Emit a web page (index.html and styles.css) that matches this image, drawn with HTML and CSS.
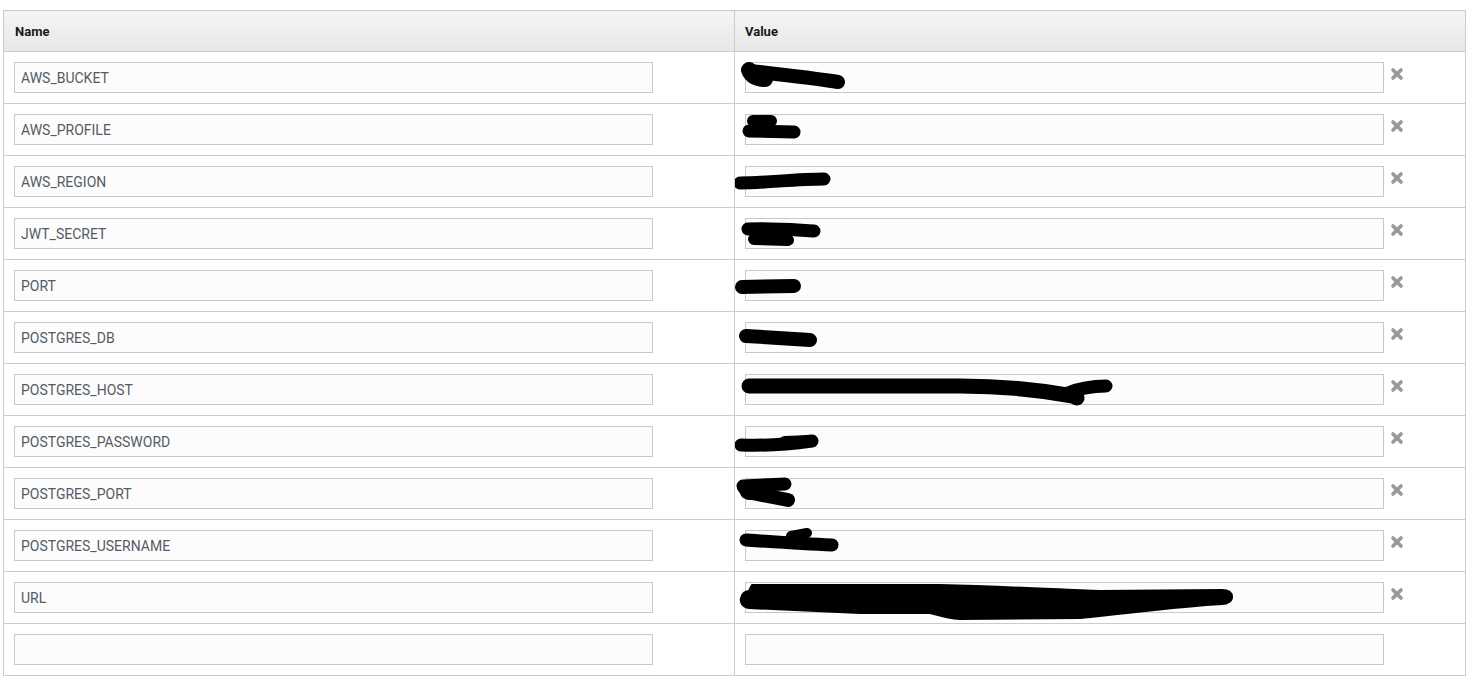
FILE: index.html
```html
<!DOCTYPE html>
<html lang="en">
<head>
<meta charset="utf-8">
<title>Environment properties</title>
<link rel="stylesheet" href="styles.css">
</head>
<body>
<div class="wrap">
<table class="env">
  <colgroup><col class="c-name"><col class="c-value"></colgroup>
  <thead>
    <tr><th>Name</th><th>Value</th></tr>
  </thead>
  <tbody>
    <tr><td><input class="field" value="AWS_BUCKET"></td><td class="vcell"><div class="vrow"><input class="field"><span class="del"><svg viewBox="0 0 14 14" width="14" height="14"><path d="M3 3L11 11M11 3L3 11" stroke="#999999" stroke-width="3.6" stroke-linecap="round"/></svg></span></div>
      <svg class="ink" viewBox="0 0 730 51"><path d="M16 19 C40 22 80 26 103 30" style="stroke-width:14"/><path d="M14 18 C16 24 22 27 30 27" style="stroke-width:16"/></svg></td></tr>
    <tr><td><input class="field" value="AWS_PROFILE"></td><td class="vcell"><div class="vrow"><input class="field"><span class="del"><svg viewBox="0 0 14 14" width="14" height="14"><path d="M3 3L11 11M11 3L3 11" stroke="#999999" stroke-width="3.6" stroke-linecap="round"/></svg></span></div>
      <svg class="ink" viewBox="0 0 730 51"><path d="M18 17 L36 17" style="stroke-width:12"/><path d="M14 27 L59 28" style="stroke-width:13"/></svg></td></tr>
    <tr><td><input class="field" value="AWS_REGION"></td><td class="vcell"><div class="vrow"><input class="field"><span class="del"><svg viewBox="0 0 14 14" width="14" height="14"><path d="M3 3L11 11M11 3L3 11" stroke="#999999" stroke-width="3.6" stroke-linecap="round"/></svg></span></div>
      <svg class="ink" viewBox="0 0 730 51"><path d="M5 27 C30 27 60 23 89 23" style="stroke-width:13"/></svg></td></tr>
    <tr><td><input class="field" value="JWT_SECRET"></td><td class="vcell"><div class="vrow"><input class="field"><span class="del"><svg viewBox="0 0 14 14" width="14" height="14"><path d="M3 3L11 11M11 3L3 11" stroke="#999999" stroke-width="3.6" stroke-linecap="round"/></svg></span></div>
      <svg class="ink" viewBox="0 0 730 51"><path d="M13 21 C40 20 60 22 79 23" style="stroke-width:13"/><path d="M19 31 L53 32" style="stroke-width:12"/></svg></td></tr>
    <tr><td><input class="field" value="PORT"></td><td class="vcell"><div class="vrow"><input class="field"><span class="del"><svg viewBox="0 0 14 14" width="14" height="14"><path d="M3 3L11 11M11 3L3 11" stroke="#999999" stroke-width="3.6" stroke-linecap="round"/></svg></span></div>
      <svg class="ink" viewBox="0 0 730 51"><path d="M7 27 L59 26" style="stroke-width:14"/></svg></td></tr>
    <tr><td><input class="field" value="POSTGRES_DB"></td><td class="vcell"><div class="vrow"><input class="field"><span class="del"><svg viewBox="0 0 14 14" width="14" height="14"><path d="M3 3L11 11M11 3L3 11" stroke="#999999" stroke-width="3.6" stroke-linecap="round"/></svg></span></div>
      <svg class="ink" viewBox="0 0 730 51"><path d="M11 24 C30 25 60 27 75 28" style="stroke-width:14"/></svg></td></tr>
    <tr><td><input class="field" value="POSTGRES_HOST"></td><td class="vcell"><div class="vrow"><input class="field"><span class="del"><svg viewBox="0 0 14 14" width="14" height="14"><path d="M3 3L11 11M11 3L3 11" stroke="#999999" stroke-width="3.6" stroke-linecap="round"/></svg></span></div>
      <svg class="ink" viewBox="0 0 730 51"><path d="M14 22 L225 22 C270 22 305 26 338 32 L342 34" style="stroke-width:15"/><path d="M333 29 C345 24 360 22 371 22" style="stroke-width:13"/></svg></td></tr>
    <tr><td><input class="field" value="POSTGRES_PASSWORD"></td><td class="vcell"><div class="vrow"><input class="field"><span class="del"><svg viewBox="0 0 14 14" width="14" height="14"><path d="M3 3L11 11M11 3L3 11" stroke="#999999" stroke-width="3.6" stroke-linecap="round"/></svg></span></div>
      <svg class="ink" viewBox="0 0 730 51"><path d="M6 29 C30 30 55 28 77 25" style="stroke-width:13"/><path d="M50 26 L76 25" style="stroke-width:12"/></svg></td></tr>
    <tr><td><input class="field" value="POSTGRES_PORT"></td><td class="vcell"><div class="vrow"><input class="field"><span class="del"><svg viewBox="0 0 14 14" width="14" height="14"><path d="M3 3L11 11M11 3L3 11" stroke="#999999" stroke-width="3.6" stroke-linecap="round"/></svg></span></div>
      <svg class="ink" viewBox="0 0 730 51"><path d="M8 18 L50 16" style="stroke-width:13"/><path d="M12 24 L53 32" style="stroke-width:14"/><path d="M9 19 L14 25" style="stroke-width:14"/></svg></td></tr>
    <tr><td><input class="field" value="POSTGRES_USERNAME"></td><td class="vcell"><div class="vrow"><input class="field"><span class="del"><svg viewBox="0 0 14 14" width="14" height="14"><path d="M3 3L11 11M11 3L3 11" stroke="#999999" stroke-width="3.6" stroke-linecap="round"/></svg></span></div>
      <svg class="ink" viewBox="0 0 730 51"><path d="M11 20 C40 22 70 24 97 25" style="stroke-width:13"/><path d="M56 16 L72 13" style="stroke-width:10"/></svg></td></tr>
    <tr><td><input class="field" value="URL"></td><td class="vcell"><div class="vrow"><input class="field"><span class="del"><svg viewBox="0 0 14 14" width="14" height="14"><path d="M3 3L11 11M11 3L3 11" stroke="#999999" stroke-width="3.6" stroke-linecap="round"/></svg></span></div>
      <svg class="ink" viewBox="0 0 730 51"><path class="fill" d="M17 13 L205 13 C280 15 330 18 365 19 L487 18 C494 18 497 21 497 25 C497 29 493 32 487 32 C450 34 420 38 345 46 L225 47 C210 46 200 42 195 41 L125 41 C80 39 40 37 14 36 C7 35 5 30 6 26 C7 21 11 19 14 19 Z"/></svg></td></tr>
    <tr><td><input class="field"></td><td class="vcell"><div class="vrow"><input class="field"></div></td></tr>
  </tbody>
</table>
</div>
</body>
</html>
```

FILE: styles.css
```css
html, body {
  margin: 0;
  padding: 0;
  background: #ffffff;
}

.wrap {
  padding: 10px 0 0 3px;
}

.env {
  width: 1463px;
  table-layout: fixed;
  border-collapse: collapse;
  border: 1px solid #cccccc;
  font-family: Roboto, "Liberation Sans", Arial, sans-serif;
}

.c-name, .c-value {
  width: 50%;
}

.env th {
  height: 40px;
  padding: 0 10px;
  text-align: left;
  font-size: 13px;
  font-weight: 700;
  color: #16191f;
  background: linear-gradient(#f5f5f5, #e7e7e7);
  border-bottom: 1px solid #cccccc;
  border-left: 1px solid #cccccc;
  vertical-align: middle;
}

.env th:first-child {
  border-left: none;
  padding-left: 11px;
}

.env td {
  padding: 10px;
  border-top: 1px solid #cccccc;
  border-left: 1px solid #cccccc;
  vertical-align: top;
}

.env td:first-child {
  border-left: none;
}

.vcell {
  position: relative;
}

.vrow {
  display: flex;
  align-items: flex-start;
  gap: 6px;
}

.field {
  display: block;
  box-sizing: border-box;
  width: 639px;
  height: 31px;
  margin: 0;
  padding: 0 6px;
  border: 1px solid #c8c8c8;
  border-radius: 0;
  background: #fcfcfc;
  font-family: Roboto, "Liberation Sans", Arial, sans-serif;
  font-size: 14px;
  color: #545b64;
  outline: none;
}

.del {
  display: flex;
  width: 14px;
  height: 14px;
  margin-top: 5px;
}

.ink {
  position: absolute;
  left: 0;
  top: 0;
  width: 730px;
  height: 51px;
  pointer-events: none;
}

.ink path {
  fill: none;
  stroke: #000000;
  stroke-width: 12;
  stroke-linecap: round;
  stroke-linejoin: round;
}

.ink path.fill {
  fill: #000000;
  stroke-width: 2;
}
```
